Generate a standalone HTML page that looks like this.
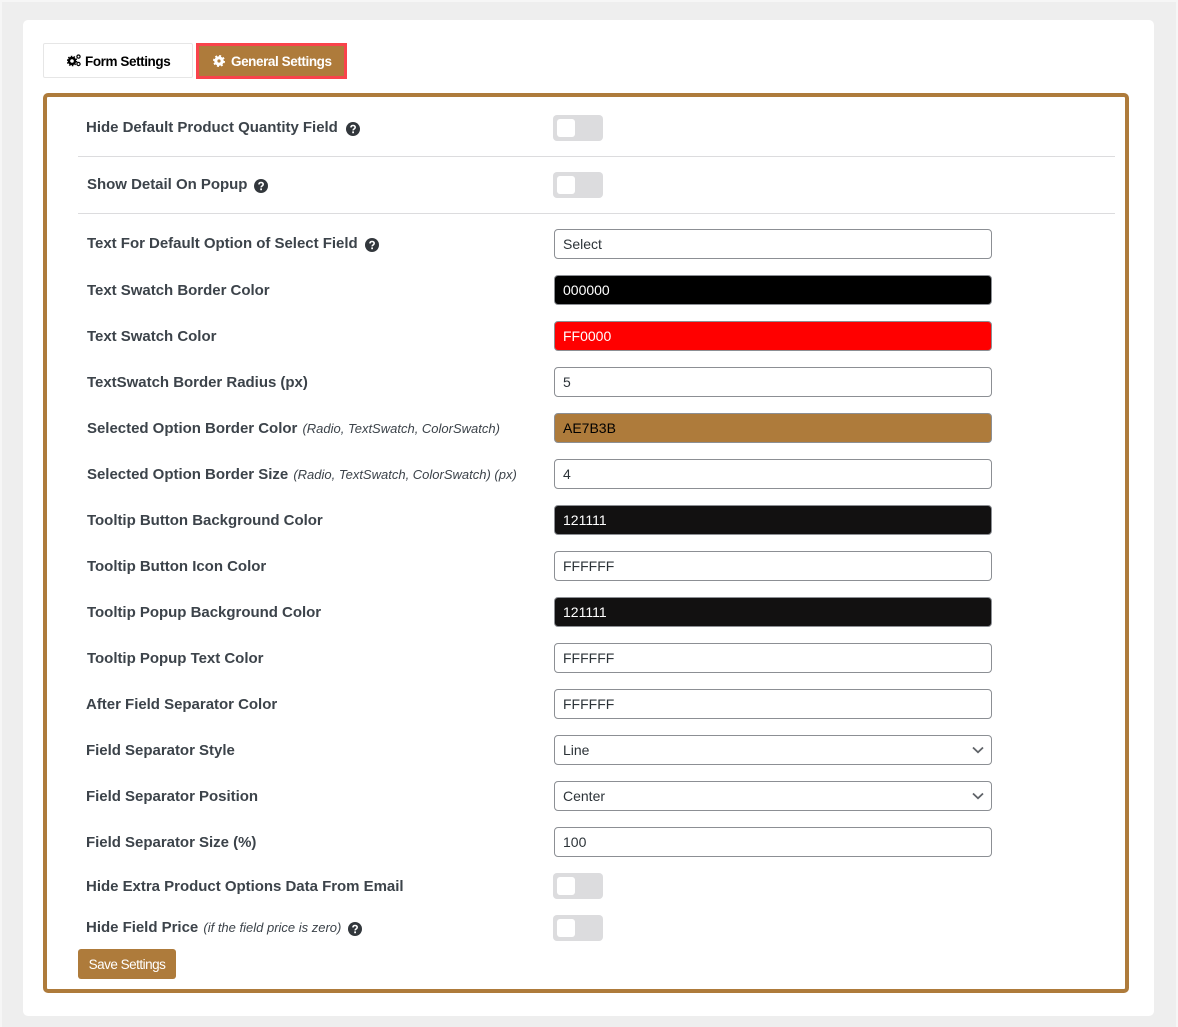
<!DOCTYPE html>
<html lang="en"><head><meta charset="utf-8"><title>General Settings</title>
<style>
html,body{margin:0;padding:0}
body{width:1178px;height:1027px;background:#f6f6f6;position:relative;overflow:hidden;font-family:"Liberation Sans",Arial,sans-serif;color:#3c434a}
.a{position:absolute;box-sizing:border-box}
#bg{left:2px;top:2px;width:1174px;height:1025px;background:#eee}
#card{left:23px;top:20px;width:1131px;height:996px;background:#fff;border-radius:5px}
.tab{height:35px;line-height:33px;font-size:13.5px;font-weight:bold;white-space:nowrap;letter-spacing:-.42px}
#t1{left:43px;top:43px;width:150px;background:#fff;border:1px solid #e6e6e6;border-radius:2px;color:#000}
#t2{left:196px;top:43px;width:151px;height:36px;background:#ae7b3b;border:3px solid #f9434b;color:#fff}
#panel{left:43px;top:93px;width:1086px;height:900px;border:4px solid #ae7b3b;border-radius:5px}
.hr{left:78px;width:1037px;height:1px;background:#dcdcde}
.l{height:20px;line-height:20px;margin-top:1px;font-size:15px;font-weight:bold;letter-spacing:-.02px;white-space:nowrap;color:#3c434a}
.l i{font-weight:normal;font-size:13px;letter-spacing:0;margin-left:1px}
.i{left:554px;width:438px;height:30px;border:1px solid #8c8f94;border-radius:4px;background:#fff;color:#2c3338;font-size:14px;line-height:28px;padding-left:8px}
.s{left:553px;width:50px;height:26px;background:#dcdcde;border-radius:4px}
.s:after{content:"";position:absolute;left:4px;top:4px;width:18px;height:18px;background:#fff;border-radius:3px}
.c{position:absolute;right:7px;top:10px}
#save{left:78px;top:949px;width:98px;height:30px;background:#ae7b3b;border-radius:3px;color:#fff;font-size:13.5px;letter-spacing:-.5px;line-height:31px;text-align:center}
</style></head><body>
<div class="a" id="bg"></div>
<div class="a" id="card"></div>
<div class="a tab" id="t1"><svg style="position:absolute;left:23px;top:10px" width="14" height="13" viewBox="0 0 14 13"><circle cx="5" cy="7" r="3" fill="none" stroke="#000" stroke-width="2.4"/><circle cx="5" cy="7" r="4.6" fill="none" stroke="#000" stroke-width="1.4" stroke-dasharray="1.5 1.4"/><circle cx="11.5" cy="2.6" r="1.6" fill="none" stroke="#000" stroke-width="1.2"/><circle cx="11.5" cy="10" r="1.6" fill="none" stroke="#000" stroke-width="1.2"/></svg><span style="position:absolute;left:41px;top:1px">Form Settings</span></div>
<div class="a tab" id="t2"><svg style="position:absolute;left:14px;top:9px" width="12" height="12" viewBox="0 0 12 12"><circle cx="6" cy="6" r="3.2" fill="none" stroke="#fff" stroke-width="3.2"/><circle cx="6" cy="6" r="5.2" fill="none" stroke="#fff" stroke-width="1.6" stroke-dasharray="2 2.08"/></svg><span style="position:absolute;left:32px;top:-1px">General Settings</span></div>
<div class="a" id="panel"></div>
<div class="a hr" style="top:156px"></div>
<div class="a hr" style="top:213px"></div>

<svg width="0" height="0" style="position:absolute"><defs><symbol id="q" viewBox="0 0 14 14"><circle cx="7" cy="7" r="7" fill="#32373c"/><path d="M4.9 5.4C5 4.2 5.9 3.5 7.1 3.5c1.2 0 2.1.8 2.1 1.8 0 1.7-2.1 1.7-2.1 3.1" fill="none" stroke="#fff" stroke-width="1.6"/><rect x="6.2" y="9.4" width="1.8" height="1.8" fill="#fff"/></symbol></defs></svg>

<div class="a l" style="left:86px;top:117px">Hide Default Product Quantity Field</div>
<svg class="a" style="left:346px;top:122px" width="14" height="14"><use href="#q"/></svg>
<div class="a s" style="top:115px"></div>
<div class="a l" style="left:87px;top:174px">Show Detail On Popup</div>
<svg class="a" style="left:254px;top:179px" width="14" height="14"><use href="#q"/></svg>
<div class="a s" style="top:172px"></div>

<div class="a l" style="left:87px;top:233px">Text For Default Option of Select Field</div>
<svg class="a" style="left:365px;top:238px" width="14" height="14"><use href="#q"/></svg>
<div class="a i" style="top:229px">Select</div>

<div class="a l" style="left:87px;top:280px">Text Swatch Border Color</div>
<div class="a i" style="top:275px;background:#000;color:#fff">000000</div>
<div class="a l" style="left:87px;top:326px">Text Swatch Color</div>
<div class="a i" style="top:321px;background:#f00;color:#fff">FF0000</div>
<div class="a l" style="left:87px;top:372px">TextSwatch Border Radius (px)</div>
<div class="a i" style="top:367px">5</div>
<div class="a l" style="left:87px;top:418px">Selected Option Border Color <i>(Radio, TextSwatch, ColorSwatch)</i></div>
<div class="a i" style="top:413px;background:#ae7b3b;color:#000">AE7B3B</div>
<div class="a l" style="left:87px;top:464px">Selected Option Border Size <i>(Radio, TextSwatch, ColorSwatch) (px)</i></div>
<div class="a i" style="top:459px">4</div>
<div class="a l" style="left:87px;top:510px">Tooltip Button Background Color</div>
<div class="a i" style="top:505px;background:#121111;color:#fff">121111</div>
<div class="a l" style="left:87px;top:556px">Tooltip Button Icon Color</div>
<div class="a i" style="top:551px">FFFFFF</div>
<div class="a l" style="left:87px;top:602px">Tooltip Popup Background Color</div>
<div class="a i" style="top:597px;background:#121111;color:#fff">121111</div>
<div class="a l" style="left:87px;top:648px">Tooltip Popup Text Color</div>
<div class="a i" style="top:643px">FFFFFF</div>
<div class="a l" style="left:86px;top:694px">After Field Separator Color</div>
<div class="a i" style="top:689px">FFFFFF</div>
<div class="a l" style="left:86px;top:740px">Field Separator Style</div>
<div class="a i" style="top:735px">Line<svg class="c" width="12" height="8" viewBox="0 0 12 8"><path d="M1 1.5L6 6.3L11 1.5" fill="none" stroke="#5f6368" stroke-width="1.8"/></svg></div>
<div class="a l" style="left:86px;top:786px">Field Separator Position</div>
<div class="a i" style="top:781px">Center<svg class="c" width="12" height="8" viewBox="0 0 12 8"><path d="M1 1.5L6 6.3L11 1.5" fill="none" stroke="#5f6368" stroke-width="1.8"/></svg></div>
<div class="a l" style="left:86px;top:832px">Field Separator Size (%)</div>
<div class="a i" style="top:827px">100</div>
<div class="a l" style="left:86px;top:876px">Hide Extra Product Options Data From Email</div>
<div class="a s" style="top:873px"></div>
<div class="a l" style="left:86px;top:917px">Hide Field Price <i>(if the field price is zero)</i></div>
<svg class="a" style="left:348px;top:922px" width="14" height="14"><use href="#q"/></svg>
<div class="a s" style="top:915px"></div>
<div class="a" id="save">Save Settings</div>
</body></html>
